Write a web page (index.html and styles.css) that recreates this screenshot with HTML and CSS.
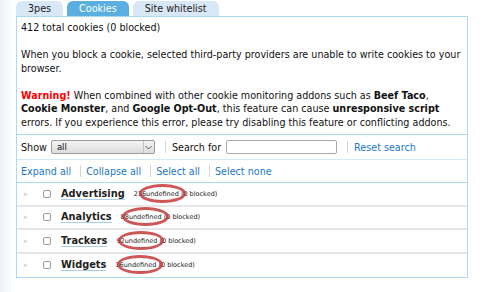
FILE: index.html
```html
<!DOCTYPE html>
<html lang="en">

<head>
  <meta charset="UTF-8" />
  <title>3pes - Cookies</title>
  <link rel="stylesheet" href="styles.css">
</head>

<body>
  <div class="tabs">
    <div class="tab">3pes</div>
    <div class="tab active">Cookies</div>
    <div class="tab">Site whitelist</div>
  </div>

  <div class="panel">
    <div class="info">
      <p>412 total cookies (0 blocked)</p>
      <p>When you block a cookie, selected third-party providers are unable to write cookies to your browser.</p>
      <p><span class="warn">Warning!</span> When combined with other cookie monitoring addons such as <b>Beef Taco</b>,
        <b>Cookie Monster</b>, and <b>Google Opt-Out</b>, this feature can cause <b>unresponsive script</b>
        errors. If you experience this error, please try disabling this feature or conflicting addons.</p>
    </div>

    <div class="toolbar">
      <label>Show</label>
      <div class="select">
        <span>all</span>
        <span class="arrow">
          <svg width="7" height="5" viewBox="0 0 7 5"><path d="M0.5 1 L3.5 4 L6.5 1" fill="none" stroke="#555" stroke-width="1"/></svg>
        </span>
      </div>
      <span class="sep"></span>
      <label>Search for</label>
      <input type="text" class="search" />
      <span class="sep"></span>
      <a href="#">Reset search</a>
    </div>

    <div class="actions">
      <a href="#">Expand all</a>
      <span class="sep"></span>
      <a href="#">Collapse all</a>
      <span class="sep"></span>
      <a href="#">Select all</a>
      <span class="sep"></span>
      <a href="#">Select none</a>
    </div>

    <div class="groups">
      <div class="group">
        <span class="toggle">&#9657;</span>
        <span class="check"></span>
        <span class="name">Advertising</span>
        <span class="count">216<span class="undef">undefined</span> (0 blocked)</span>
      </div>
      <div class="group">
        <span class="toggle">&#9657;</span>
        <span class="check"></span>
        <span class="name">Analytics</span>
        <span class="count">88<span class="undef">undefined</span> (0 blocked)</span>
      </div>
      <div class="group">
        <span class="toggle">&#9657;</span>
        <span class="check"></span>
        <span class="name">Trackers</span>
        <span class="count">92<span class="undef">undefined</span> (0 blocked)</span>
      </div>
      <div class="group">
        <span class="toggle">&#9657;</span>
        <span class="check"></span>
        <span class="name">Widgets</span>
        <span class="count">16<span class="undef">undefined</span> (0 blocked)</span>
      </div>
    </div>
  </div>
</body>

</html>
```

FILE: styles.css
```css
* {
  box-sizing: border-box;
}

body {
  margin: 0;
  padding: 1px 0 0 16px;
  font-family: 'DejaVu Sans', sans-serif;
  font-size: 9.6px;
  color: #111;
  background: linear-gradient(to right, #eef1f5, #ffffff 14px);
  min-height: 292px;
}

.tabs {
  display: flex;
  gap: 4px;
}

.tab {
  height: 15px;
  padding: 0 12px;
  line-height: 15px;
  background-color: #d9e8f6;
  border-radius: 6px 6px 0 0;
  color: #222;
}

.tab.active {
  background-color: #5aaee0;
  color: #ffffff;
}

.panel {
  width: 452px;
  border: 1px solid #addaf3;
  background: #ffffff;
}

.info {
  padding: 4px 4px 5px;
  line-height: 13.5px;
  border-bottom: 1px solid #addaf3;
}

.info p {
  margin: 0 0 13.5px;
}

.info p:last-child {
  margin-bottom: 0;
}

.warn {
  color: #ff0000;
  font-weight: bold;
}

.toolbar,
.actions {
  display: flex;
  align-items: center;
  padding: 0 4px;
}

.toolbar {
  height: 25px;
  border-bottom: 1px solid #d6e8f4;
}

.actions {
  height: 23px;
  border-bottom: 1px solid #addaf3;
}

.toolbar label {
  margin-right: 4px;
}

.select {
  display: flex;
  align-items: center;
  justify-content: space-between;
  width: 104px;
  height: 14px;
  padding-left: 5px;
  border: 1px solid #9a9a9a;
  border-radius: 2px;
  background: linear-gradient(#f4f4f4, #dcdcdc);
  font-size: 8.5px;
}

.select .arrow {
  display: flex;
  align-items: center;
  justify-content: center;
  width: 11px;
  height: 100%;
  border-left: 1px solid #c4c4c4;
}

.sep {
  width: 1px;
  height: 12px;
  background: #d4d4d4;
}

.toolbar .sep {
  margin: 0 6px 0 10px;
}

.search {
  width: 111px;
  height: 14px;
  margin: 0 0 0 1px;
  border: 1px solid #a8a8a8;
  border-radius: 2px;
}

a {
  color: #2277c4;
  text-decoration: none;
}

.actions .sep {
  margin: 0 5px 0 9px;
}

.group {
  display: flex;
  align-items: center;
  height: 23.5px;
  padding-left: 7px;
  border-bottom: 2px solid #e6e6e6;
}

.group:last-child {
  border-bottom: none;
}

.toggle {
  color: #aaaaaa;
  font-size: 7px;
  width: 19px;
}

.check {
  width: 8px;
  height: 8px;
  border: 1px solid #999;
  border-radius: 2px;
  margin-right: 10px;
}

.name {
  font-weight: bold;
  font-size: 9.8px;
  color: #222;
  border-bottom: 1px solid #aacde8;
  line-height: 11px;
  margin-right: 9px;
}

.count {
  font-size: 6.5px;
  color: #222;
}

.undef {
  position: relative;
}

.undef::after {
  content: '';
  position: absolute;
  left: -7px;
  right: -7px;
  top: -6px;
  bottom: -5px;
  border: 3px solid rgba(196, 56, 56, 0.85);
  border-radius: 50%;
}
```
